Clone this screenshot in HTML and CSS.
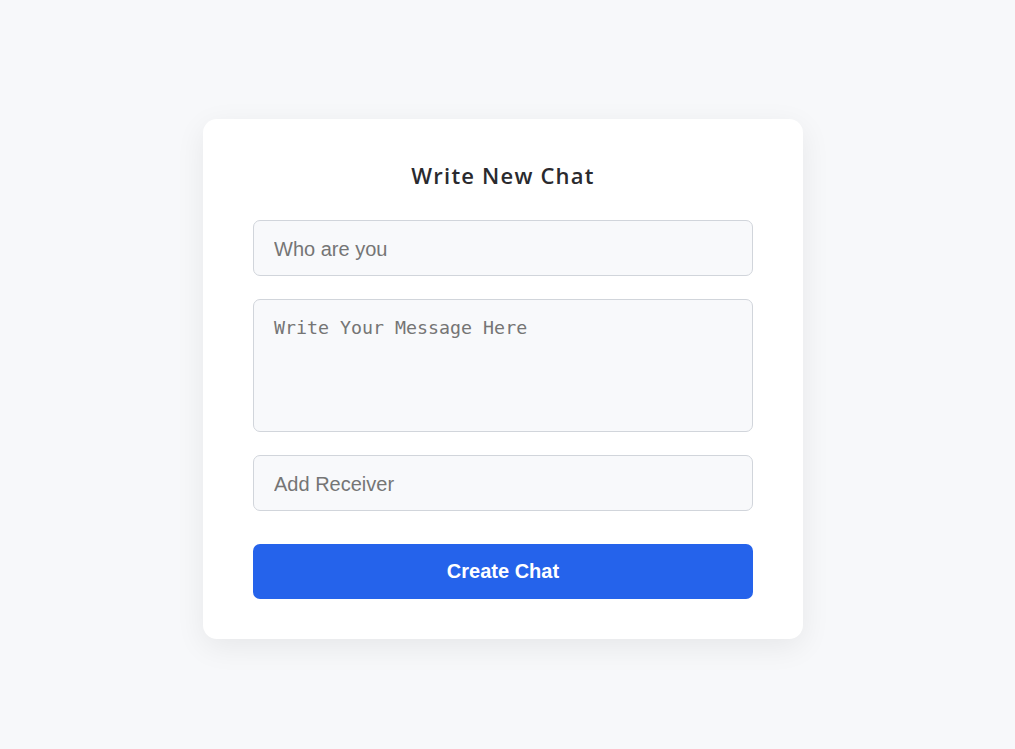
FILE: index.html
```html
<!DOCTYPE html>
<html>
<head>
<meta charset="utf-8">
<link rel="stylesheet" href="styles.css">
</head>
<body>
<div class="page">
  <form class="card">
    <h2 class="title">Write New Chat</h2>
    <input class="field" type="text" placeholder="Who are you">
    <textarea class="field area" placeholder="Write Your Message Here"></textarea>
    <input class="field last" type="text" placeholder="Add Receiver">
    <button class="btn" type="button">Create Chat</button>
  </form>
</div>
</body>
</html>
```

FILE: styles.css
```css
html, body {
  margin: 0;
  padding: 0;
  background: #f7f8fa;
}
.page {
  min-height: 749px;
  box-sizing: border-box;
  display: flex;
  align-items: center;
  justify-content: center;
  padding: 8px 9px 0 0;
}
.card {
  width: 600px;
  box-sizing: border-box;
  background: #fff;
  border-radius: 14px;
  box-shadow: 0 8px 30px rgba(0, 0, 0, 0.07);
  padding: 40px 50px 40px;
  display: flex;
  flex-direction: column;
}
.title {
  margin: 0 0 29px;
  text-align: center;
  font-family: "Open Sans", sans-serif;
  font-weight: 600;
  font-size: 22px;
  line-height: 32px;
  letter-spacing: 1.2px;
  color: #2a2a2e;
}
.field {
  display: block;
  box-sizing: border-box;
  width: 100%;
  height: 56px;
  margin: 0 0 23px;
  padding: 3px 20px 0;
  border: 1px solid #d1d5db;
  border-radius: 7px;
  background: #f8f9fb;
  font-family: "Liberation Sans", Arial, sans-serif;
  font-size: 20px;
  color: #333;
  outline: none;
}
.field::placeholder {
  color: #757575;
}
.area {
  height: 133px;
  padding: 17px 20px;
  resize: none;
  font-family: "DejaVu Sans Mono", monospace;
  font-size: 18.3px;
  line-height: 22px;
}
.last {
  margin-bottom: 33px;
}
.btn {
  display: block;
  height: 55px;
  border: 0;
  border-radius: 7px;
  background: #2563eb;
  color: #fff;
  font-family: "Liberation Sans", Arial, sans-serif;
  font-weight: 700;
  font-size: 20px;
  cursor: pointer;
}
```
